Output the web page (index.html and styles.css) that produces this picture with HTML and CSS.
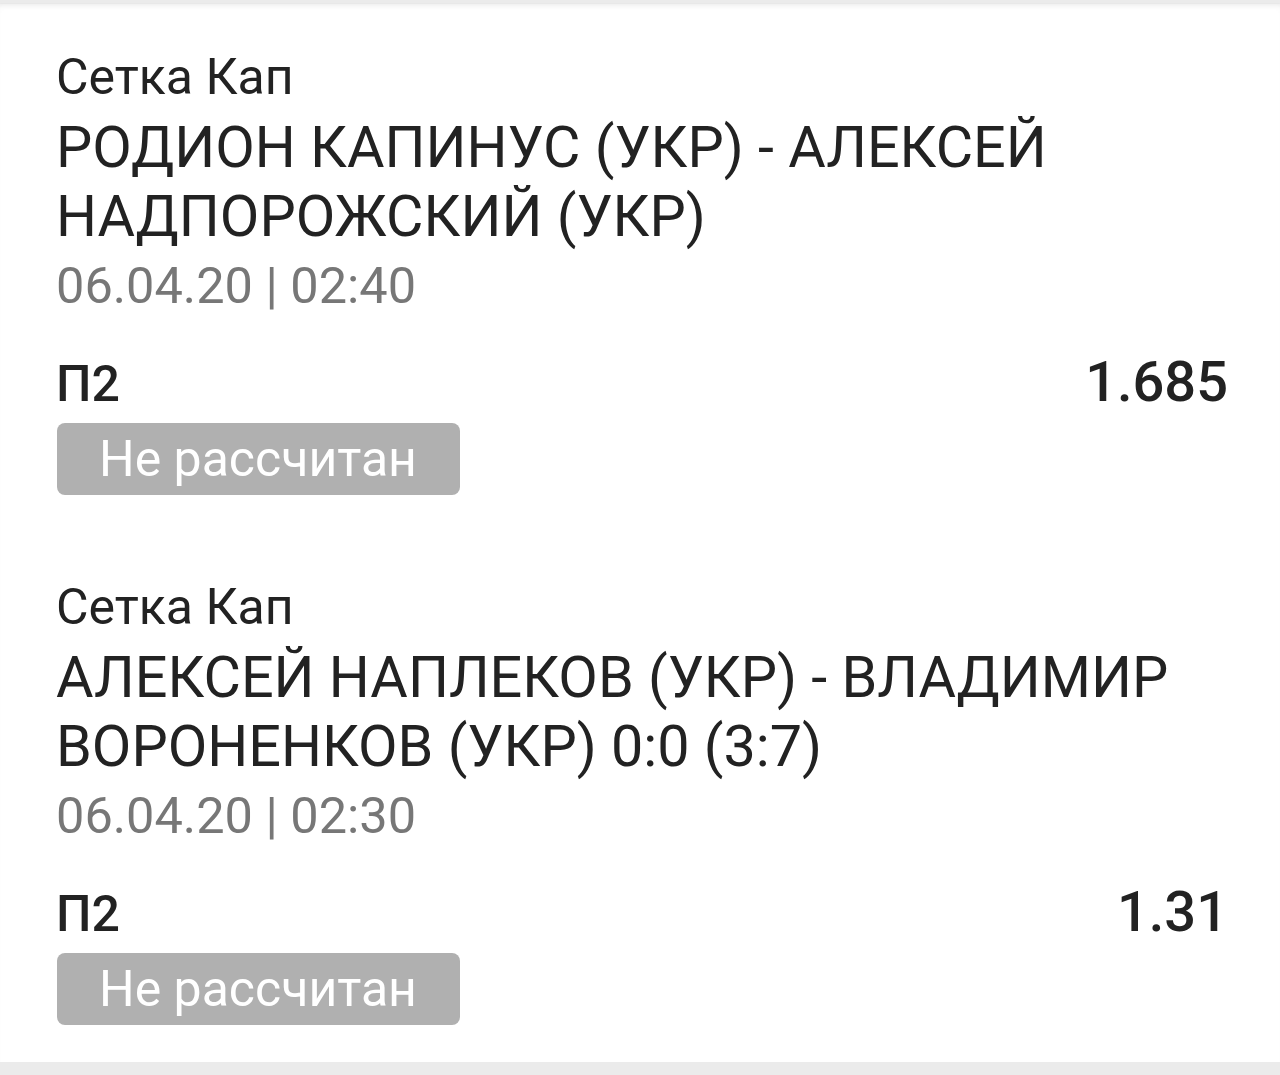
FILE: index.html
```html
<!DOCTYPE html>
<html lang="ru">
<head>
	<meta charset="UTF-8">
	<title>Купон</title>
	<link rel="stylesheet" href="styles.css">
</head>
<body>
<div class="card">
	<div class="bet">
		<div class="league">Сетка Кап</div>
		<div class="event">РОДИОН КАПИНУС (УКР) - АЛЕКСЕЙ НАДПОРОЖСКИЙ (УКР)</div>
		<div class="date">06.04.20 | 02:40</div>
		<div class="row">
			<span class="outcome">П2</span>
			<span class="odd">1.685</span>
		</div>
		<span class="status">Не рассчитан</span>
	</div>
	<div class="bet">
		<div class="league">Сетка Кап</div>
		<div class="event">АЛЕКСЕЙ НАПЛЕКОВ (УКР) - ВЛАДИМИР ВОРОНЕНКОВ (УКР) 0:0 (3:7)</div>
		<div class="date">06.04.20 | 02:30</div>
		<div class="row">
			<span class="outcome">П2</span>
			<span class="odd">1.31</span>
		</div>
		<span class="status">Не рассчитан</span>
	</div>
</div>
</body>
</html>
```
FILE: styles.css
```css
html, body {
	margin: 0;
	padding: 0;
}
body {
	background: #ebebeb;
	font-family: Roboto, "Noto Sans", sans-serif;
	color: #222;
	padding-top: 4px;
}
.card {
	background: #fff;
	padding: 37px 52px 37px 56px;
	box-shadow: inset 0 5px 7px -5px rgba(0, 0, 0, .12), 0 1px 2px rgba(0, 0, 0, .18);
}
.bet + .bet {
	margin-top: 76px;
}
.league {
	font-size: 50px;
	line-height: 72px;
}
.event {
	font-size: 57.5px;
	line-height: 69px;
	padding-right: 40px;
}
.date {
	font-size: 50.5px;
	line-height: 69px;
	color: #777;
}
.row {
	display: flex;
	justify-content: space-between;
	align-items: baseline;
	margin-top: 28px;
	line-height: 69px;
}
.outcome {
	font-size: 50px;
	font-weight: 500;
}
.odd {
	font-size: 56px;
	font-weight: 500;
}
.status {
	display: inline-block;
	margin: 4px 0 0 1px;
	background: #b0b0b0;
	color: #fff;
	font-size: 50px;
	line-height: 72px;
	padding: 0 43px 0 42px;
	border-radius: 8px;
}
```
